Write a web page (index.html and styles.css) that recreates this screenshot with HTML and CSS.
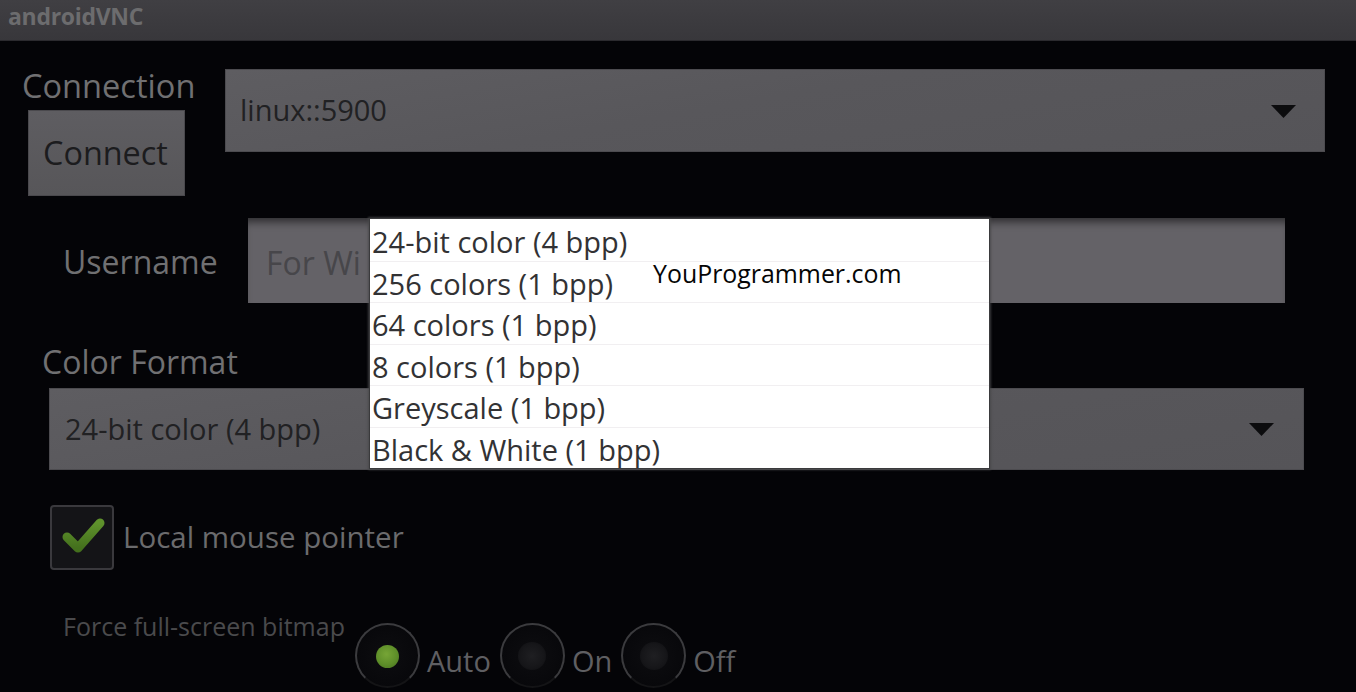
FILE: index.html
```html
<!DOCTYPE html>
<html lang="en">
<head>
<meta charset="utf-8">
<title>androidVNC</title>
<link rel="stylesheet" href="styles.css">
</head>
<body>
<header class="titlebar"><span class="app-title">androidVNC</span></header>
<main class="content">
  <section class="row-conn">
    <div class="conn-left">
      <div class="label conn-label">Connection</div>
      <div class="btn">Connect</div>
    </div>
    <div class="spinner spinner-conn">
      <span class="spinner-text">linux::5900</span>
      <svg class="arrow" width="25" height="13" viewBox="0 0 25 13"><path d="M0 0 H25 L12.5 13 Z" fill="#0c0c0e"/></svg>
    </div>
  </section>

  <section class="row-user">
    <div class="label user-label">Username</div>
    <div class="input"><span class="placeholder">For Wi</span></div>
  </section>

  <div class="label cf-label">Color Format</div>
  <div class="spinner spinner-cf">
    <span class="spinner-text">24-bit color (4 bpp)</span>
    <svg class="arrow" width="25" height="13" viewBox="0 0 25 13"><path d="M0 0 H25 L12.5 13 Z" fill="#0c0c0e"/></svg>
  </div>

  <div class="check-row">
    <div class="checkbox">
      <svg width="64" height="65" viewBox="0 0 64 65">
        <defs>
          <linearGradient id="g" x1="0" y1="0" x2="0" y2="1">
            <stop offset="0" stop-color="#5f922c"/>
            <stop offset="1" stop-color="#44701d"/>
          </linearGradient>
        </defs>
        <path d="M17 32 L28 43 L50 18" fill="none" stroke="url(#g)" stroke-width="9" stroke-linecap="round" stroke-linejoin="round"/>
      </svg>
    </div>
    <span class="check-label">Local mouse pointer</span>
  </div>

  <div class="bitmap-row">
    <div class="bitmap-label">Force full-screen bitmap</div>
    <div class="radio-group">
      <div class="radio"><span class="ring"><span class="dot dot-on"></span></span><span class="radio-label">Auto</span></div>
      <div class="radio"><span class="ring"><span class="dot"></span></span><span class="radio-label">On</span></div>
      <div class="radio"><span class="ring"><span class="dot"></span></span><span class="radio-label">Off</span></div>
    </div>
  </div>

  <ul class="popup">
    <li>24-bit color (4 bpp)</li>
    <li>256 colors (1 bpp)</li>
    <li>64 colors (1 bpp)</li>
    <li>8 colors (1 bpp)</li>
    <li>Greyscale (1 bpp)</li>
    <li>Black &amp; White (1 bpp)</li>
  </ul>
  <div class="watermark">YouProgrammer.com</div>
</main>
</body>
</html>
```

FILE: styles.css
```css
* { box-sizing: border-box; }
html, body {
  margin: 0;
  padding: 0;
  width: 1356px;
  height: 692px;
  overflow: hidden;
  background: #040407;
  font-family: "Open Sans", "Noto Sans", sans-serif;
}
.titlebar {
  height: 41px;
  background: linear-gradient(#403f43, #38373b);
  border-bottom: 1px solid #2b2a2e;
  padding: 3px 0 0 8px;
}
.app-title {
  font-weight: 700;
  font-size: 23px;
  line-height: 26px;
  color: #6c6c6e;
  letter-spacing: -0.3px;
}
.content {
  position: relative;
  height: 651px;
}
.label {
  font-size: 32px;
  line-height: 32px;
  color: #707072;
}
.row-conn {
  display: flex;
  align-items: flex-start;
  padding-top: 28px;
}
.conn-left {
  width: 225px;
  display: flex;
  flex-direction: column;
  align-items: flex-start;
}
.conn-label {
  margin: 1px 0 0 22px;
  font-size: 32.6px;
}
.btn {
  margin: 8px 0 0 28px;
  width: 157px;
  height: 86px;
  background: linear-gradient(#5e5d61, #575659);
  border: 1px solid #4a494d;
  color: #1c1c1e;
  font-size: 32.4px;
  display: flex;
  align-items: center;
  padding-left: 14px;
  padding-bottom: 2px;
}
.spinner {
  display: flex;
  align-items: center;
  justify-content: space-between;
  background: linear-gradient(170deg, #5e5d61 0%, #58575b 45%, #555458 100%);
  border: 1px solid #4c4b4f;
  color: #212123;
  font-size: 29px;
}
.spinner-conn {
  width: 1100px;
  height: 83px;
  padding: 0 28px 0 14px;
}
.spinner-text { padding-bottom: 2px; }
.arrow { display: block; margin-top: 1px; }
.row-user {
  display: flex;
  align-items: center;
  margin-top: 22px;
  padding-left: 63px;
}
.user-label {
  width: 185px;
  padding-top: 2px;
}
.input {
  width: 1037px;
  height: 85px;
  background: #646267;
  box-shadow: inset 0 9px 8px -5px rgba(0, 0, 0, 0.55);
  display: flex;
  align-items: center;
  padding: 4px 0 0 18px;
  font-size: 32px;
  color: #47464a;
  white-space: nowrap;
}
.cf-label {
  margin: 43px 0 0 42px;
}
.spinner-cf {
  margin: 10px 0 0 49px;
  width: 1255px;
  height: 82px;
  padding: 0 29px 0 15px;
}
.check-row {
  display: flex;
  align-items: center;
  margin: 35px 0 0 50px;
}
.checkbox {
  width: 64px;
  height: 65px;
  border: 2px solid #3a393d;
  border-radius: 4px;
  background: #141417;
  position: relative;
}
.checkbox svg {
  position: absolute;
  left: -2px;
  top: -2px;
}
.check-label {
  margin-left: 9px;
  font-size: 29.5px;
  color: #6b6b6d;
  padding-bottom: 2px;
}
.bitmap-row {
  display: flex;
  align-items: flex-start;
  margin-top: 44px;
  padding-left: 63px;
}
.bitmap-label {
  width: 292px;
  font-size: 25px;
  line-height: 25px;
  color: #4a4a4c;
}
.radio-group {
  display: flex;
  margin-top: 9px;
}
.radio {
  display: flex;
  align-items: center;
  margin-right: 9px;
}
.ring {
  width: 65px;
  height: 65px;
  border-radius: 50%;
  border: 2px solid #3b3b3e;
  border-bottom-color: #141416;
  background: radial-gradient(circle, #0d0d10 0%, #060609 100%);
  display: flex;
  align-items: center;
  justify-content: center;
}
.dot {
  width: 28px;
  height: 28px;
  border-radius: 50%;
  background: radial-gradient(circle, #1f1f22 0%, #161619 60%, #0b0b0e 100%);
}
.dot-on {
  width: 23px;
  height: 23px;
  margin-top: 2px;
  background: radial-gradient(circle at 45% 40%, #76a536 0%, #5e8e29 55%, #46701e 100%);
}
.radio-label {
  margin-left: 7px;
  margin-top: 10px;
  font-size: 29px;
  color: #5f5f62;
}
.popup {
  position: absolute;
  left: 369px;
  top: 177px;
  width: 621px;
  height: 251px;
  margin: 0;
  padding: 0;
  list-style: none;
  background: #ffffff;
  border: 1px solid #3a3a3c;
  box-shadow: 0 0 2px 1px rgba(70, 70, 72, 0.8);
}
.popup li {
  height: 41.5px;
  display: flex;
  align-items: center;
  padding: 4px 0 0 2px;
  font-size: 29px;
  line-height: 32px;
  color: #323234;
  border-top: 1px solid #f1eff1;
  white-space: nowrap;
}
.popup li:first-child { border-top: none; }
.watermark {
  position: absolute;
  left: 653px;
  top: 220px;
  font-size: 24.9px;
  line-height: 25px;
  color: #050505;
}
```
